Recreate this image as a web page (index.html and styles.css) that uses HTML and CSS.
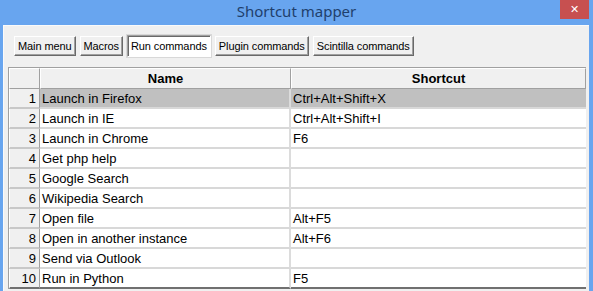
FILE: index.html
```html
<!DOCTYPE html>
<html lang="en">
  <head>
    <meta charset="UTF-8" />
    <meta name="viewport" content="width=device-width, initial-scale=1.0" />
    <title>Shortcut mapper</title>
    <link rel="stylesheet" href="styles.css">
  </head>
  <body>
    <div class="window">
      <div class="titlebar">
        <span class="title">Shortcut mapper</span>
        <span class="close">&#x2715;</span>
      </div>

      <div class="frame">
        <div class="tabs">
          <button class="tab">Main menu</button>
          <button class="tab">Macros</button>
          <button class="tab active">Run commands</button>
          <button class="tab">Plugin commands</button>
          <button class="tab">Scintilla commands</button>
        </div>

        <div class="grid">
          <table>
            <thead>
              <tr>
                <th class="num"></th>
                <th class="name">Name</th>
                <th class="key">Shortcut</th>
              </tr>
            </thead>
            <tbody>
              <tr class="selected">
                <td class="num">1</td>
                <td class="name">Launch in Firefox</td>
                <td class="key">Ctrl+Alt+Shift+X</td>
              </tr>
              <tr>
                <td class="num">2</td>
                <td class="name">Launch in IE</td>
                <td class="key">Ctrl+Alt+Shift+I</td>
              </tr>
              <tr>
                <td class="num">3</td>
                <td class="name">Launch in Chrome</td>
                <td class="key">F6</td>
              </tr>
              <tr>
                <td class="num">4</td>
                <td class="name">Get php help</td>
                <td class="key"></td>
              </tr>
              <tr>
                <td class="num">5</td>
                <td class="name">Google Search</td>
                <td class="key"></td>
              </tr>
              <tr>
                <td class="num">6</td>
                <td class="name">Wikipedia Search</td>
                <td class="key"></td>
              </tr>
              <tr>
                <td class="num">7</td>
                <td class="name">Open file</td>
                <td class="key">Alt+F5</td>
              </tr>
              <tr>
                <td class="num">8</td>
                <td class="name">Open in another instance</td>
                <td class="key">Alt+F6</td>
              </tr>
              <tr>
                <td class="num">9</td>
                <td class="name">Send via Outlook</td>
                <td class="key"></td>
              </tr>
              <tr>
                <td class="num">10</td>
                <td class="name">Run in Python</td>
                <td class="key">F5</td>
              </tr>
            </tbody>
          </table>
        </div>
      </div>
    </div>
  </body>
</html>
```

FILE: styles.css
```css
body {
  margin: 0;
  padding: 0;
  width: 593px;
  height: 291px;
  overflow: hidden;
  background-color: #68a5ef;
  font-family: "Liberation Sans", Arial, sans-serif;
  color: #000;
}

.window {
  display: flex;
  flex-direction: column;
  height: 291px;
}

.titlebar {
  position: relative;
  height: 25px;
  text-align: center;
}

.titlebar .title {
  font-family: "Noto Sans", "Open Sans", sans-serif;
  font-size: 15px;
  line-height: 23px;
  color: #1f3f6c;
}

.titlebar .close {
  position: absolute;
  top: 0;
  right: 4px;
  width: 29px;
  height: 19px;
  background-color: #c75050;
  color: #fff;
  font-family: "DejaVu Sans", sans-serif;
  font-size: 11px;
  font-weight: bold;
  line-height: 19px;
  text-align: center;
}

.frame {
  flex: 1;
  margin: 0 4px 0 3px;
  background-color: #f0f0f0;
  border-top: 1px solid #fafafa;
  border-left: 1px solid #fafafa;
}

.tabs {
  display: flex;
  gap: 4px;
  padding: 10px 0 0 10px;
  height: 21px;
}

.tab {
  font-family: "Liberation Sans", Tahoma, sans-serif;
  font-size: 11px;
  letter-spacing: -0.1px;
  height: 20px;
  margin: 0;
  padding: 0 3px;
  background-color: #f0f0f0;
  color: #000;
  border: 1px solid;
  border-color: #fff #696969 #696969 #fff;
  box-shadow: inset -1px -1px 0 #a0a0a0;
}

.tab.active {
  height: 22px;
  margin-top: -1px;
  background-color: #fff;
  border-color: #a0a0a0 #fff #fff #a0a0a0;
  box-shadow: inset 1px 1px 0 #696969, 0 0 0 1px #d8d8d8;
}

.grid {
  margin: 10px 0 0 4px;
  width: 577px;
  border-top: 1px solid #a0a0a0;
  border-left: 1px solid #a0a0a0;
  background-color: #fff;
}

table {
  border-collapse: separate;
  border-spacing: 0;
  width: 100%;
  table-layout: fixed;
  font-size: 13px;
}

th,
td {
  padding: 0 2px;
  white-space: nowrap;
  overflow: hidden;
}

th {
  height: 19px;
  font-weight: bold;
  text-align: center;
  background-color: #f0f0f0;
  border-top: 1px solid #fff;
  border-left: 1px solid #fff;
  border-right: 1px solid #a0a0a0;
  border-bottom: 1px solid #a0a0a0;
}

td {
  height: 18px;
  border-bottom: 2px solid #d8d8d8;
}

.num {
  width: 25px;
  text-align: right;
}

.name {
  width: 245px;
}

td.num {
  background-color: #f0f0f0;
  border-left: 1px solid #fff;
  border-right: 1px solid #a0a0a0;
  border-bottom-color: #c8c8c8;
  padding-right: 3px;
}

td.name {
  border-right: 2px solid #dcdcdc;
}

tr.selected td.name,
tr.selected td.key {
  background-color: #c0c0c0;
}

tbody tr:last-child td {
  border-bottom: 2px solid #707070;
}
```
